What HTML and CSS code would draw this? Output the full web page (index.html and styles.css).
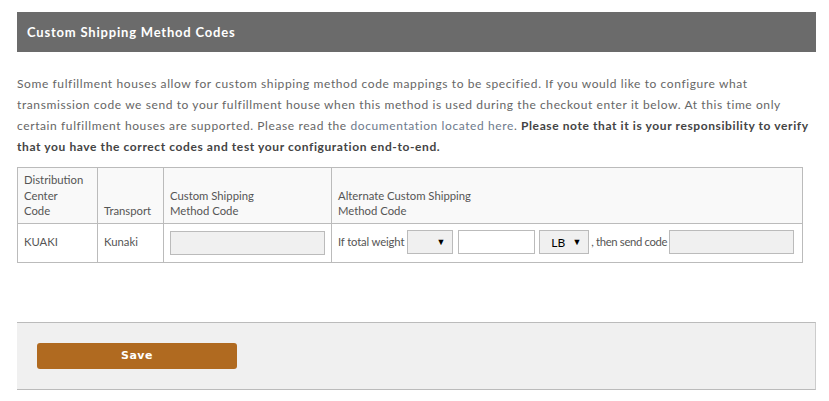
FILE: index.html
```html
<!DOCTYPE html>
<html lang="en">
<head>
  <meta charset="UTF-8">
  <meta name="viewport" content="width=device-width, initial-scale=1.0">
  <link rel="stylesheet" href="styles.css">
  <title>Custom Shipping Method Codes</title>
</head>
<body>
  <div class="container">
    <h2 class="section-title">Custom Shipping Method Codes</h2>

    <p class="intro">
      Some fulfillment houses allow for custom shipping method code mappings to be specified. If you would like to configure what
      transmission code we send to your fulfillment house when this method is used during the checkout enter it below. At this time only
      certain fulfillment houses are supported. Please read the <a href="#">documentation located here</a>.
      <strong>Please note that it is your responsibility to verify that you have the correct codes and test your configuration end-to-end.</strong>
    </p>

    <table class="codes">
      <colgroup>
        <col class="col-dc">
        <col class="col-transport">
        <col class="col-code">
        <col class="col-alt">
      </colgroup>
      <thead>
        <tr>
          <th>Distribution<br>Center<br>Code</th>
          <th>Transport</th>
          <th>Custom Shipping<br>Method Code</th>
          <th>Alternate Custom Shipping<br>Method Code</th>
        </tr>
      </thead>
      <tbody>
        <tr>
          <td>KUAKI</td>
          <td>Kunaki</td>
          <td><input type="text" class="field field-code"></td>
          <td>
            <div class="alt">
              <span>If total weight</span>
              <span class="select select-op"><select><option></option></select></span>
              <input type="text" class="field field-weight">
              <span class="select select-unit"><select><option>LB</option></select></span>
              <span class="alt-then">, then send code</span>
              <input type="text" class="field field-alt">
            </div>
          </td>
        </tr>
      </tbody>
    </table>

    <div class="actions">
      <button type="button" class="btn-save">Save</button>
    </div>
  </div>
</body>
</html>
```

FILE: styles.css
```css
html, body {
  margin: 0;
  background-color: #fff;
  font-family: Lato, "Open Sans", Arial, sans-serif;
}

.container {
  padding: 12px 13px 0 17px;
}

.section-title {
  margin: 0;
  height: 40px;
  line-height: 40px;
  padding: 0 10px;
  background-color: #6b6b6b;
  color: #fff;
  font-size: 13px;
  font-weight: bold;
  letter-spacing: 0.8px;
}

.intro {
  margin: 21px 0 10px;
  font-size: 12px;
  line-height: 21px;
  letter-spacing: 0.6px;
  color: #666;
}

.intro a {
  color: #6e7a8c;
  text-decoration: none;
}

.intro strong {
  color: #444;
}

.codes {
  width: 786px;
  table-layout: fixed;
  border-collapse: collapse;
  font-size: 11.3px;
  color: #555;
}

.col-dc { width: 80px; }
.col-transport { width: 66px; }
.col-code { width: 168px; }

.codes th,
.codes td {
  border: 1px solid #bbb;
  text-align: left;
  font-weight: normal;
  padding: 6px;
}

.codes th {
  background-color: #f9f9f9;
  vertical-align: bottom;
  line-height: 15.5px;
  padding-top: 4px;
  padding-bottom: 4px;
}

.codes td {
  padding-top: 6px;
  padding-bottom: 7px;
  line-height: 24px;
}

.alt {
  display: flex;
  align-items: center;
  white-space: nowrap;
  letter-spacing: -0.15px;
}

.field {
  box-sizing: border-box;
  height: 24px;
  border: 1px solid #bbb;
  background-color: #f0f0f0;
  margin: 0;
  vertical-align: middle;
}

.field-code { width: 155px; }
.field-weight { width: 77px; background-color: #fff; margin-left: 5px; }
.field-alt { width: 125px; margin-left: 2px; }

.alt-then {
  margin-left: 2px;
  letter-spacing: -0.35px;
}

.select {
  position: relative;
  display: inline-block;
  line-height: normal;
}

.select select {
  appearance: none;
  -webkit-appearance: none;
  box-sizing: border-box;
  height: 24px;
  border: 1px solid #bbb;
  background-color: #f0f0f0;
  font-family: Lato, Arial, sans-serif;
  font-size: 12px;
  color: #000;
  padding: 0 0 0 11px;
  margin: 0;
  display: block;
}

.select::after {
  content: "\25BC";
  position: absolute;
  right: 8px;
  top: 6px;
  font-size: 9px;
  color: #000;
  pointer-events: none;
}

.select-op { margin-left: 3px; }
.select-op select { width: 46px; }
.select-unit { margin-left: 4px; }
.select-unit select { width: 50px; }

.actions {
  margin-top: 59px;
  height: 26px;
  padding: 20px 20px;
  background-color: #f0f0f0;
  border-top: 1px solid #bbb;
  border-bottom: 1px solid #bbb;
  border-right: 1px solid #ccc;
}

.btn-save {
  display: block;
  width: 200px;
  height: 26px;
  border: 0;
  border-radius: 3px;
  background-color: #b06a20;
  color: #fff;
  font-family: "DejaVu Sans", Verdana, sans-serif;
  font-size: 11px;
  font-weight: bold;
  letter-spacing: 0.5px;
}
```
